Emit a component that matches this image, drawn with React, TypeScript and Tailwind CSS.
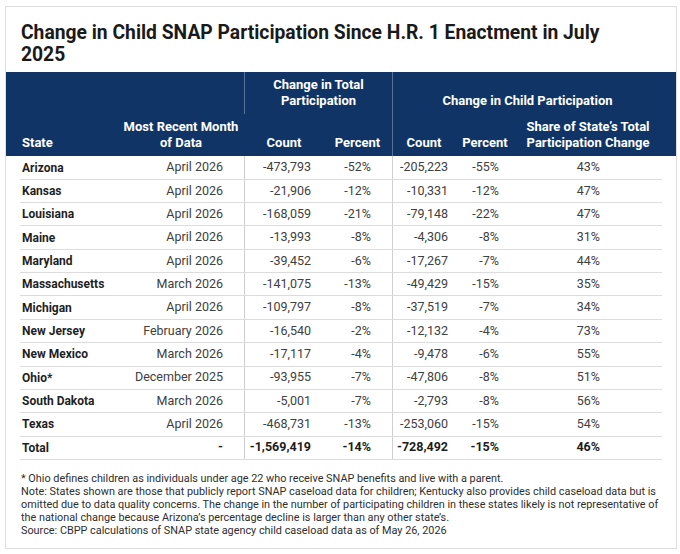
import React from "react";

interface Row {
	state: string;
	month: string;
	count: string;
	percent: string;
	childCount: string;
	childPercent: string;
	share: string;
}

const rows: Row[] = [
	{ state: "Arizona", month: "April 2026", count: "-473,793", percent: "-52%", childCount: "-205,223", childPercent: "-55%", share: "43%" },
	{ state: "Kansas", month: "April 2026", count: "-21,906", percent: "-12%", childCount: "-10,331", childPercent: "-12%", share: "47%" },
	{ state: "Louisiana", month: "April 2026", count: "-168,059", percent: "-21%", childCount: "-79,148", childPercent: "-22%", share: "47%" },
	{ state: "Maine", month: "April 2026", count: "-13,993", percent: "-8%", childCount: "-4,306", childPercent: "-8%", share: "31%" },
	{ state: "Maryland", month: "April 2026", count: "-39,452", percent: "-6%", childCount: "-17,267", childPercent: "-7%", share: "44%" },
	{ state: "Massachusetts", month: "March 2026", count: "-141,075", percent: "-13%", childCount: "-49,429", childPercent: "-15%", share: "35%" },
	{ state: "Michigan", month: "April 2026", count: "-109,797", percent: "-8%", childCount: "-37,519", childPercent: "-7%", share: "34%" },
	{ state: "New Jersey", month: "February 2026", count: "-16,540", percent: "-2%", childCount: "-12,132", childPercent: "-4%", share: "73%" },
	{ state: "New Mexico", month: "March 2026", count: "-17,117", percent: "-4%", childCount: "-9,478", childPercent: "-6%", share: "55%" },
	{ state: "Ohio*", month: "December 2025", count: "-93,955", percent: "-7%", childCount: "-47,806", childPercent: "-8%", share: "51%" },
	{ state: "South Dakota", month: "March 2026", count: "-5,001", percent: "-7%", childCount: "-2,793", childPercent: "-8%", share: "56%" },
	{ state: "Texas", month: "April 2026", count: "-468,731", percent: "-13%", childCount: "-253,060", childPercent: "-15%", share: "54%" }
];

const total: Row = {
	state: "Total",
	month: "-",
	count: "-1,569,419",
	percent: "-14%",
	childCount: "-728,492",
	childPercent: "-15%",
	share: "46%"
};

// state, month, count, percent | child count, child percent, share
const cols = "grid grid-cols-[110px_114px_82px_66px_70px_58px_142px]";

function DataRow({ row, bold }: { row: Row; bold?: boolean }) {
	const val = bold ? "font-bold text-[#1c1c1c]" : "text-[#404040]";
	return (
		<div className={`${cols} h-[23.35px] items-center whitespace-nowrap border-b border-[#dcdcdc] text-[12.5px]`}>
			<div className="pl-[2px] text-[12px] font-bold text-[#1f1f1f]">{row.state}</div>
			<div className={`pr-[21px] text-right ${val}`}>{row.month}</div>
			<div className={`flex h-full items-center justify-end border-l border-[#cfcfcf] pr-[15px] ${val}`}>
				{row.count}
			</div>
			<div className={`pr-[21px] text-right ${val}`}>{row.percent}</div>
			<div className={`flex h-full items-center justify-end border-l border-[#cfcfcf] pr-[14px] ${val}`}>
				{row.childCount}
			</div>
			<div className={`pr-[21px] text-right ${val}`}>{row.childPercent}</div>
			<div className={`pr-[62px] text-right ${val}`}>{row.share}</div>
		</div>
	);
}

export default function App() {
	return (
		<div className="bg-white pl-[5px] pt-[6px] font-['Roboto',sans-serif]">
			<div className="w-[672px] border border-[#dedede] bg-white">
				<h1 className="w-[620px] pl-[15px] pt-[15px] pb-[7px] text-[19.3px] font-bold leading-[21.7px] text-[#1a1a1a]">
					Change in Child SNAP Participation Since H.R. 1 Enactment in July 2025
				</h1>

				<div className="bg-[#0f3465] px-[14px] text-[13px] font-bold leading-[16px] text-white">
					<div className={`${cols} whitespace-nowrap`}>
						<div className="col-span-2 h-[42px]" />
						<div className="col-span-2 flex items-end justify-center border-l border-[#56739a] pb-[5px] text-center">
							Change in Total
							<br />
							Participation
						</div>
						<div className="col-span-3 flex items-end justify-center border-l border-[#56739a] pb-[5px]">
							Change in Child Participation
						</div>

						<div className="flex h-[42px] items-end pb-[5px] pl-[2px]">State</div>
						<div className="flex items-end justify-center pb-[5px] pr-[12px] text-center">
							Most Recent Month
							<br />
							of Data
						</div>
						<div className="flex items-end justify-center pb-[5px] pr-[2px]">Count</div>
						<div className="flex items-end justify-center pb-[5px] pr-[3px]">Percent</div>
						<div className="flex items-end justify-center border-l border-[#56739a] pb-[5px] pr-[7px]">Count</div>
						<div className="flex items-end justify-center pb-[5px] pr-[12px]">Percent</div>
						<div className="flex items-end justify-center pb-[5px] pr-[6px] text-center">
							Share of State’s Total
							<br />
							Participation Change
						</div>
					</div>
				</div>

				<div className="px-[14px]">
					{rows.map(r => (
						<DataRow key={r.state} row={r} />
					))}
					<DataRow row={total} bold />
				</div>

				<div className="w-[660px] pl-[15px] pt-[12px] pb-[11px] text-[10.85px] leading-[13.1px] text-[#2e2e2e]">
					<p>* Ohio defines children as individuals under age 22 who receive SNAP benefits and live with a parent.</p>
					<p>
						Note: States shown are those that publicly report SNAP caseload data for children; Kentucky also provides child
						caseload data but is omitted due to data quality concerns. The change in the number of participating children in
						these states likely is not representative of the national change because Arizona’s percentage decline is larger
						than any other state’s.
					</p>
					<p>Source: CBPP calculations of SNAP state agency child caseload data as of May 26, 2026</p>
				</div>
			</div>
		</div>
	);
}
